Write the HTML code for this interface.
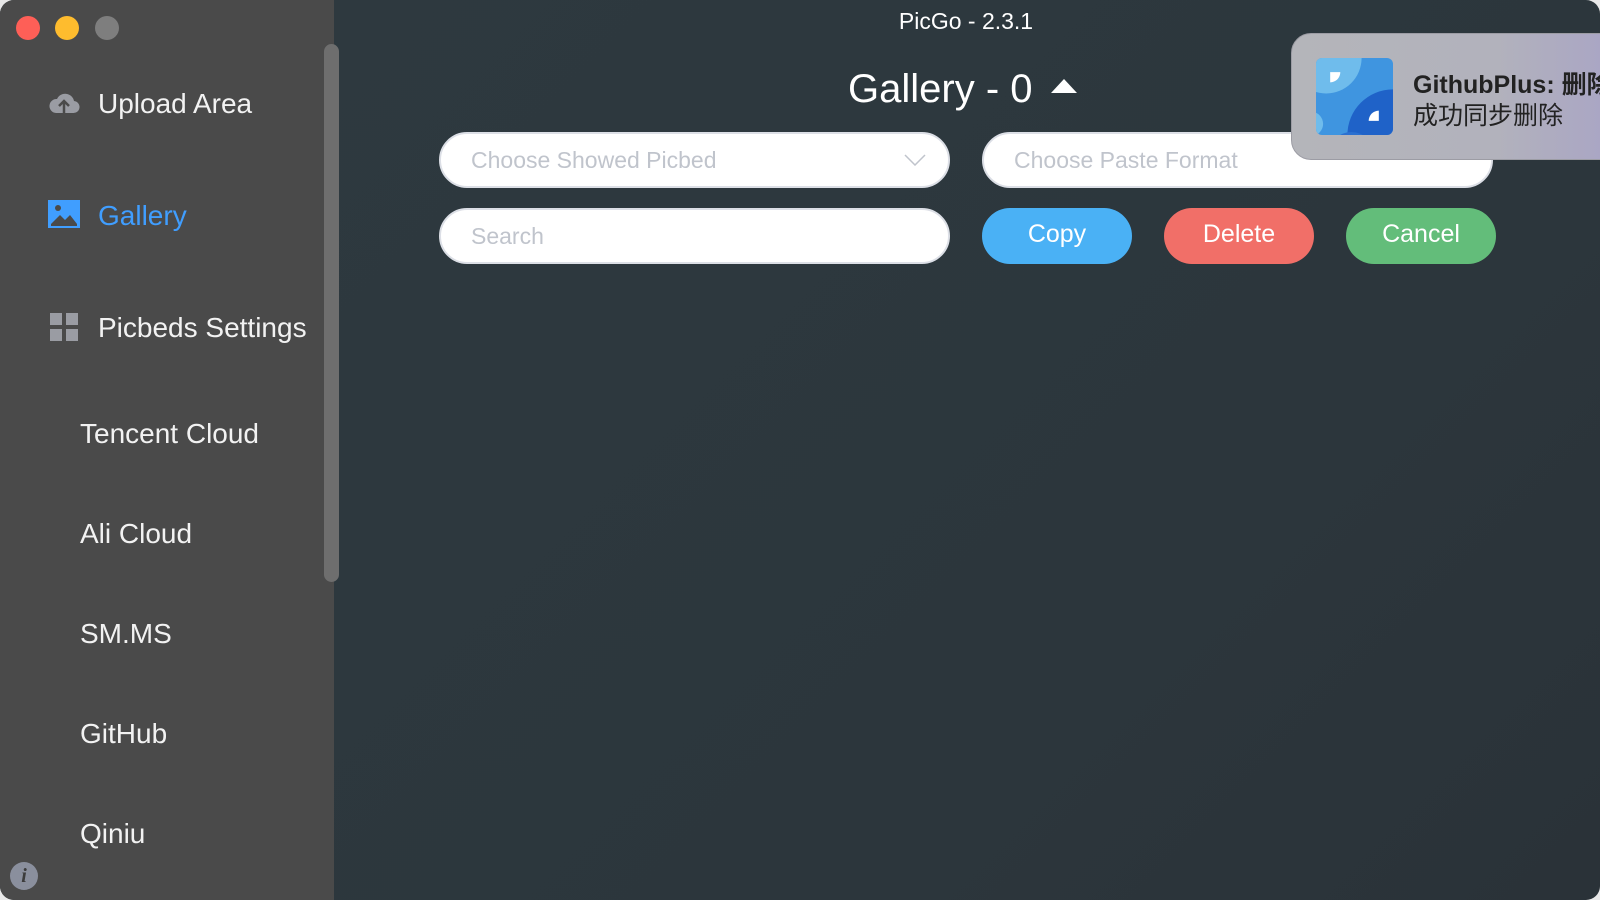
<!DOCTYPE html>
<html><head><meta charset="utf-8"><style>
*{margin:0;padding:0;box-sizing:border-box}
body{width:1600px;height:900px;overflow:hidden;background:#e8e8e8;font-family:"Liberation Sans","Noto Sans CJK SC",sans-serif;position:relative}
.win{position:absolute;left:0;top:0;width:1600px;height:900px;border-radius:14px;overflow:hidden;background:linear-gradient(135deg,#2e3a40,#2c363c 70%,#2a3238)}
.side{position:absolute;left:0;top:0;width:334px;height:900px;background:#4a4a4a}
.dot{position:absolute;top:16px;width:24px;height:24px;border-radius:50%}
.nav{position:absolute;color:#f2f2f2;font-size:28px;line-height:32px}
.sub{position:absolute;left:80px;color:#f2f2f2;font-size:28px;line-height:32px}
.t{position:absolute;color:#fff;font-size:23px;left:0;width:1932px;text-align:center;top:8px}
.box{position:absolute;background:#fff;border-radius:28px;border:2px solid #dcdfe6;height:56px;color:#c0c4cc;font-size:23px;line-height:52px;padding-left:30px}
.btn{position:absolute;top:208px;height:56px;border-radius:28px;color:#fff;font-size:25px;text-align:center;line-height:52px;width:150px}
</style></head><body>
<div class="win">
<div class="side">
<div class="dot" style="left:16px;background:#fe5f57"></div>
<div class="dot" style="left:55px;background:#febc2e"></div>
<div class="dot" style="left:95px;background:#7e7e7e"></div>
<svg style="position:absolute;left:48px;top:89px" width="32" height="26" viewBox="0 0 32 26"><path d="M8 24h17a6 6 0 0 0 1-12 9 9 0 0 0-17-2A7 7 0 0 0 8 24z" fill="#9a9ca3"/><path d="M16 24V13M11 17l5-5 5 5" stroke="#4a4a4a" stroke-width="2.5" fill="none"/></svg>
<div class="nav" style="left:98px;top:88px">Upload Area</div>
<svg style="position:absolute;left:48px;top:200px" width="32" height="28" viewBox="0 0 32 28"><rect width="32" height="28" fill="#409eff"/><circle cx="10" cy="8" r="3" fill="#4a4a4a"/><path d="M3 24l9-9 5 5 5-5 7 9z" fill="#4a4a4a"/><path d="M3 25h26" stroke="#4a4a4a" stroke-width="2"/></svg>
<div class="nav" style="left:98px;top:200px;color:#409eff">Gallery</div>
<svg style="position:absolute;left:50px;top:313px" width="28" height="28"><rect width="12" height="12" fill="#9a9ca3"/><rect x="16" width="12" height="12" fill="#9a9ca3"/><rect y="16" width="12" height="12" fill="#9a9ca3"/><rect x="16" y="16" width="12" height="12" fill="#9a9ca3"/></svg>
<div class="nav" style="left:98px;top:312px">Picbeds Settings</div>
<div class="sub" style="top:418px">Tencent Cloud</div>
<div class="sub" style="top:518px">Ali Cloud</div>
<div class="sub" style="top:618px">SM.MS</div>
<div class="sub" style="top:718px">GitHub</div>
<div class="sub" style="top:818px">Qiniu</div>
<div style="position:absolute;left:324px;top:44px;width:15px;height:538px;border-radius:8px;background:#6e6e6e"></div>
<div style="position:absolute;left:10px;top:862px;width:28px;height:28px;border-radius:50%;background:#8a8f9d;color:#3c3c3c;font:italic bold 20px 'Liberation Serif',serif;text-align:center;line-height:28px">i</div>
</div>
<div class="t">PicGo - 2.3.1</div>
<div style="position:absolute;left:848px;top:67px;color:#fff;font-size:40px">Gallery - 0</div>
<svg style="position:absolute;left:1051px;top:79px" width="26" height="14"><path d="M0 14L13 0 26 14z" fill="#fff"/></svg>
<div class="box" style="left:439px;top:132px;width:511px">Choose Showed Picbed<svg style="position:absolute;right:22px;top:20px" width="22" height="12"><path d="M1 1l10 10 10-10" stroke="#c0c4cc" stroke-width="1.5" fill="none"/></svg></div>
<div class="box" style="left:982px;top:132px;width:511px">Choose Paste Format</div>
<div class="box" style="left:439px;top:208px;width:511px">Search</div>
<div class="btn" style="left:982px;background:#4ab1f5">Copy</div>
<div class="btn" style="left:1164px;background:#f16f68">Delete</div>
<div class="btn" style="left:1346px;background:#63bd7a">Cancel</div>
<div style="position:absolute;left:1291px;top:33px;width:340px;height:127px;border-radius:20px;background:linear-gradient(90deg,#b4b5ba,#b2b2bc 60%,#a8a3c6);border:1px solid #9c9ca4"></div>
<svg style="position:absolute;left:1316px;top:58px" width="77" height="77" viewBox="0 0 76 76"><defs><clipPath id="c"><rect width="76" height="76" rx="6"/></clipPath></defs><g clip-path="url(#c)"><rect width="76" height="76" fill="#3f95e0"/><circle cx="10" cy="0" r="35" fill="#6fbcec"/><circle cx="76" cy="76" r="45" fill="#1f62c8"/><circle cx="-5" cy="65" r="12" fill="#6fbcec"/><circle cx="35" cy="95" r="22" fill="#2b70d0"/><path d="M14 14h10a10 10 0 0 1-10 10z" fill="#fff"/><path d="M62 62h-10a10 10 0 0 1 10-10z" fill="#fff"/></g></svg>
<div style="position:absolute;left:1413px;top:65px;font-size:25px;font-weight:bold;color:#222;white-space:nowrap">GithubPlus: 删除</div>
<div style="position:absolute;left:1413px;top:96px;font-size:25px;color:#222;white-space:nowrap">成功同步删除</div>
</div>
</body></html>
